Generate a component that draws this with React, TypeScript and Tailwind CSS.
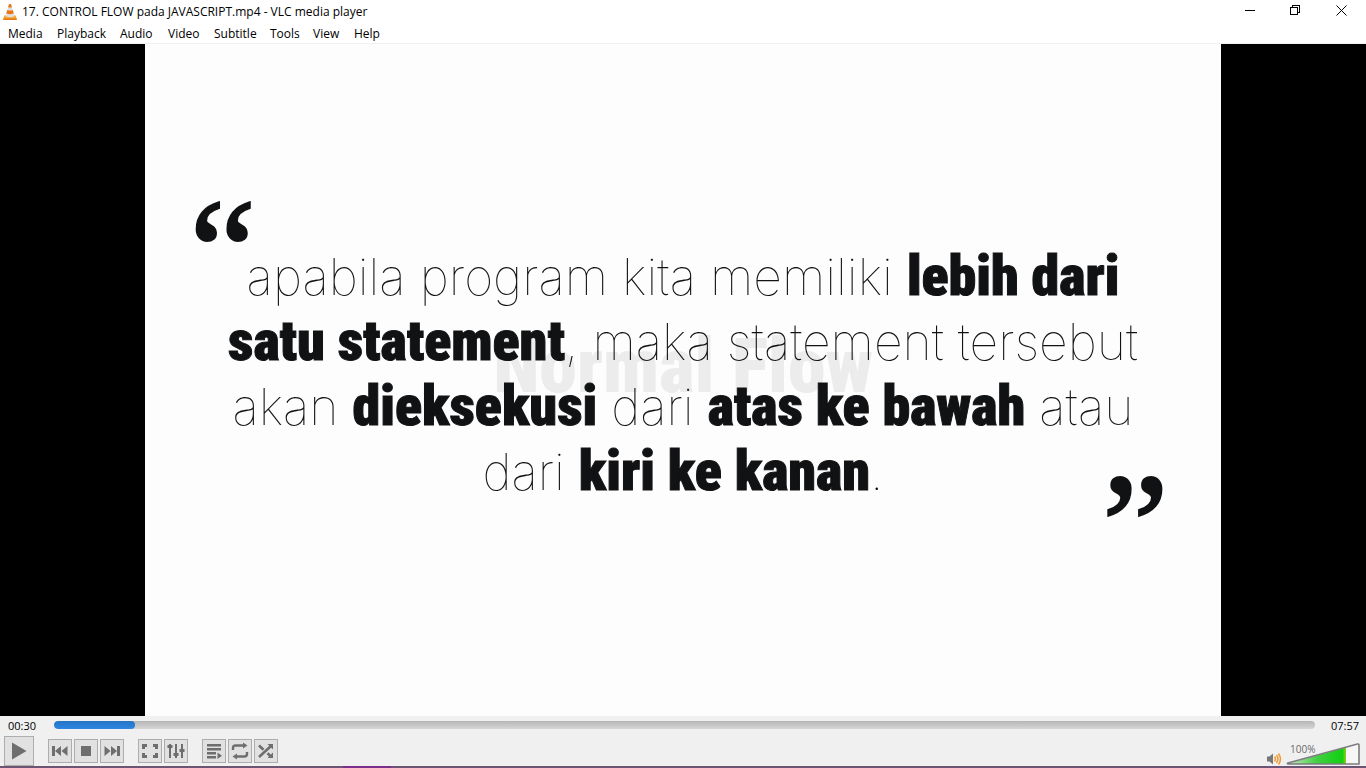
import type { ReactNode } from 'react';

const menus = [
  { label: 'Media', width: 'w-[49px]' },
  { label: 'Playback', width: 'w-[63px]' },
  { label: 'Audio', width: 'w-[48px]' },
  { label: 'Video', width: 'w-[46px]' },
  { label: 'Subtitle', width: 'w-[56px]' },
  { label: 'Tools', width: 'w-[43px]' },
  { label: 'View', width: 'w-[41px]' },
  { label: 'Help', width: 'w-[41px]' },
];

function Cone() {
  return (
    <svg viewBox="0 0 16 18" className="h-[18px] w-4 shrink-0" aria-hidden="true">
      <path d="M2.6 12.2h10.8l1.4 3.8q.2.9-.8.9H2q-1 0-.8-.9z" fill="#f7a236" />
      <path d="M1.2 15.6h13.6l.1.5q.1.8-.9.8H2q-1 0-.9-.8z" fill="#e07c10" />
      <path d="M7 1.2q1-.6 2 0L12.6 13q-4.6 2.4-9.2 0z" fill="#dfe0e2" />
      <path d="M7 1.2q1-.6 2 0l.9 3q-1.9.8-3.8 0z" fill="#e8720c" />
      <path d="M5.300 7q2.700 1.100 5.400 0l1 3.300q-3.700 1.700-7.400 0z" fill="#ef7214" />
    </svg>
  );
}

function WindowButton({ label, children }: { label: string; children: ReactNode }) {
  return (
    <button type="button" aria-label={label} className="flex h-5 w-[46px] items-center justify-center">
      <svg viewBox="0 0 11 11" className="size-[11px]" fill="none" stroke="#000" shapeRendering="crispEdges" aria-hidden="true">
        {children}
      </svg>
    </button>
  );
}

function Tool({ label, children }: { label: string; children: ReactNode }) {
  return (
    <button
      type="button"
      aria-label={label}
      className="flex size-6 items-center justify-center border border-[#adadad] bg-[#e1e1e1] text-[#6e6e6e]"
    >
      <svg viewBox="0 0 22 22" className="size-[22px]" fill="currentColor" aria-hidden="true">
        {children}
      </svg>
    </button>
  );
}

function Strong({ children }: { children: ReactNode }) {
  return (
    <strong className="font-['Roboto_Condensed'] text-[56px] font-black [-webkit-text-stroke:1px_#111214]">{children}</strong>
  );
}

export default function App() {
  return (
    <div className="flex h-screen flex-col overflow-hidden bg-white font-['Open_Sans',sans-serif] text-xs text-black">
      <header className="flex h-6 shrink-0 items-center justify-between pl-0.5 pr-0.5">
        <div className="flex items-center gap-1">
          <Cone />
          <h1 className="whitespace-nowrap leading-5">17. CONTROL FLOW pada JAVASCRIPT.mp4 - VLC media player</h1>
        </div>
        <div className="flex pb-1">
          <WindowButton label="Minimize">
            <path d="M1 5.5h10" />
          </WindowButton>
          <WindowButton label="Restore">
            <path d="M.5 2.5h7v7h-7zM2.5 2.5v-2h7v7h-2" />
          </WindowButton>
          <WindowButton label="Close">
            <path d="M.5.5l10 10M10.5.5l-10 10" shapeRendering="auto" />
          </WindowButton>
        </div>
      </header>

      <nav className="flex h-5 shrink-0 items-center border-b border-[#f0f0f0] pl-2">
        {menus.map((m) => (
          <button key={m.label} type="button" className={`${m.width} text-left leading-5`}>
            {m.label}
          </button>
        ))}
      </nav>

      <main className="flex min-h-0 flex-1 justify-center bg-black">
        <section className="relative isolate flex aspect-[16/10] h-full flex-col bg-[#fdfdfd] px-11 pt-[138px] text-[#111214]">
          <div className="h-[62px] font-['Liberation_Serif'] text-[150px] leading-[140px] [-webkit-text-stroke:2px_#111214]">“</div>
          <p className="whitespace-nowrap text-center font-['Inter'] text-[50px] font-thin leading-[65px]">
            <span className="block h-[65px]">
              apabila program kita memiliki <Strong>lebih dari</Strong>
            </span>
            <span className="block h-[65px]">
              <Strong>satu statement</Strong>, maka statement tersebut
            </span>
            <span className="block h-[65px]">
              akan <Strong>dieksekusi</Strong> dari <Strong>atas ke bawah</Strong> atau
            </span>
            <span className="block h-[65px]">
              dari <Strong>kiri ke kanan</Strong>.
            </span>
          </p>
          <div className="-mt-12 mr-2 h-[60px] text-right font-['Liberation_Serif'] text-[150px] leading-[140px] [-webkit-text-stroke:2px_#111214]">”</div>
          <div className="absolute inset-x-0 top-[280px] -z-10 text-center font-['Roboto_Condensed'] text-[76px] font-black leading-[84px] text-[#ececec]">
            Normal Flow
          </div>
        </section>
      </main>

      <footer className="shrink-0 bg-[#f0f0f0]">
        <div className="flex h-[19px] items-center justify-between gap-4 pl-2 pr-[7px] text-[11px] leading-4">
          <time className="w-[30px]">00:30</time>
          <div className="relative mb-0.5 h-2 flex-1 overflow-hidden rounded bg-linear-to-b from-[#b6b6b6] to-[#d6d6d6]">
            <div className="h-full rounded bg-linear-to-b from-[#2474c4] to-[#2d86e0]" style={{ width: `${(30.6 / 477) * 100}%` }} />
            <input
              type="range"
              aria-label="Position"
              min={0}
              max={477}
              defaultValue={30}
              className="absolute inset-0 h-full w-full opacity-0"
            />
          </div>
          <time>07:57</time>
        </div>

        <div className="flex h-[31px] items-end justify-between pl-1 pr-[5px]">
          <div className="flex items-center gap-3.5">
            <button
              type="button"
              aria-label="Play"
              className="flex size-[30px] items-center justify-center border border-[#adadad] bg-[#e1e1e1]"
            >
              <svg viewBox="0 0 28 28" className="size-7" fill="#6e6e6e" aria-hidden="true">
                <path d="M7 5.5l14.5 8.5L7 22.5z" />
              </svg>
            </button>
            <div className="flex gap-0.5">
              <Tool label="Previous">
                <path d="M3 6h3v10H3zM12 6v10l-6-5zM18.5 6v10l-6-5z" />
              </Tool>
              <Tool label="Stop">
                <path d="M6 6h10v10H6z" />
              </Tool>
              <Tool label="Next">
                <path d="M16 6h3v10h-3zM10 6v10l6-5zM3.5 6v10l6-5z" />
              </Tool>
            </div>
            <div className="flex gap-0.5">
              <Tool label="Fullscreen">
                <path d="M3 4h5v3H6v2H3zM14 4h5v5h-3V7h-2zM3 13h3v2h2v3H3zM16 13h3v5h-5v-3h2z" />
              </Tool>
              <Tool label="Extended settings">
                <path d="M4 4h2v14H4zM10 4h2v14h-2zM16 4h2v14h-2zM2.5 5h5v3h-5zM8.5 13h5v3h-5zM14.5 9h5v3h-5z" />
              </Tool>
            </div>
            <div className="flex gap-0.5">
              <Tool label="Playlist">
                <path d="M4 4h14v2.500H4zM4 8h14v2.500H4zM4 12h9v2.500H4zM4 16h9v2.500H4zM14.500 12.500l4.500 3.200-4.500 3.200z" />
              </Tool>
              <Tool label="Loop">
                <path
                  d="M4 10V8q0-2.500 2.500-2.500H15M18 12v2q0 2.500-2.500 2.500H7"
                  fill="none"
                  stroke="currentColor"
                  strokeWidth="2.400"
                />
                <path d="M14 2.500l4.500 3-4.500 3zM8 13.500l-4.500 3 4.500 3z" />
              </Tool>
              <Tool label="Random">
                <path
                  d="M4 17L16 6M4 5.500l4.500 4.200M12.500 13.200L16.500 17"
                  fill="none"
                  stroke="currentColor"
                  strokeWidth="2.600"
                />
                <path d="M12.500 4H18v5.500zM12.500 18H18v-5.500z" />
              </Tool>
            </div>
          </div>

          <div className="flex h-full items-end gap-1">
            <button type="button" aria-label="Mute">
              <svg viewBox="0 0 16 14" className="h-3.5 w-4" fill="none" aria-hidden="true">
                <path d="M1 4.500h2.500L7 1.500v11L3.500 9.500H1z" fill="#777" />
                <path d="M8.500 4.500q1.800 2.500 0 5M10.500 3q2.800 4 0 8M12.500 1.500q3.800 5.500 0 11" stroke="#f29a2e" strokeWidth="1.500" />
              </svg>
            </button>
            <label className="relative h-[27px] w-[75px]">
              <svg viewBox="0 0 75 27" className="h-[27px] w-[75px]" aria-hidden="true">
                <defs>
                  <linearGradient id="volume" x1="0" x2="1">
                    <stop offset="0" stopColor="#c8e8c8" />
                    <stop offset=".5" stopColor="#42cf42" />
                    <stop offset=".94" stopColor="#10d010" />
                    <stop offset="1" stopColor="#a0c818" />
                  </linearGradient>
                </defs>
                <path d="M2 24.5L73 5v20H2z" fill="#f6f6f6" />
                <path d="M2 24.5L60 8.5V25H2z" fill="url(#volume)" />
                <path d="M2 24L71.5 5q1.5-.3 1.5 1.2V25H2q-1.300-.4 0-1z" fill="none" stroke="#7c7c7c" strokeWidth="1.600" />
              </svg>
              <span className="absolute left-1 top-1 text-[10px] leading-3 text-[#6a6a6a]">100%</span>
              <input type="range" min={0} max={125} defaultValue={100} className="absolute inset-0 h-full w-full opacity-0" />
            </label>
          </div>
        </div>

        <div className="flex h-0.5 bg-[#6b5474]">
          <div className="ml-[343px] w-12 bg-[#7b2f8c]" />
        </div>
      </footer>
    </div>
  );
}
